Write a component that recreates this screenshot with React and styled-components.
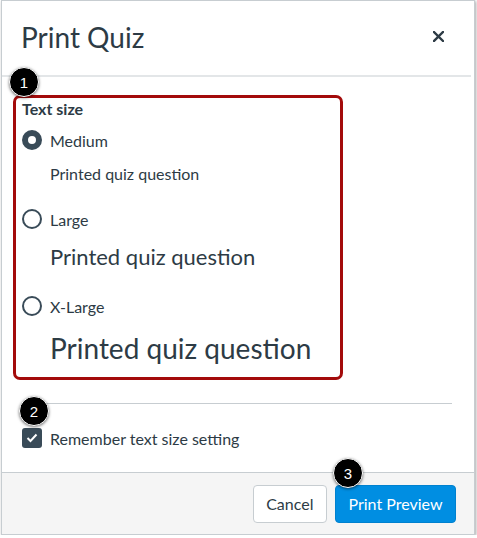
import React, { useState } from 'react';
import styled, { createGlobalStyle } from 'styled-components';

const GlobalStyle = createGlobalStyle`
  body {
    margin: 0;
    background: #fff;
    font-family: Lato, "Liberation Sans", sans-serif;
    color: #2d3b45;
  }
`;

const Dialog = styled.div`
  position: relative;
  box-sizing: border-box;
  width: 474px;
  height: 535px;
  margin-left: 1px;
  border: 1px solid #c7cdd1;
  box-shadow: 1px 1px 3px rgba(0, 0, 0, 0.35);
  display: flex;
  flex-direction: column;
  background: #fff;
`;

const Header = styled.div`
  height: 74px;
  display: flex;
  align-items: center;
  justify-content: space-between;
  padding: 0 26px 0 19px;
  border-bottom: 2px solid #e3e6e8;
  margin-right: 3px;
`;

const Title = styled.h2`
  margin: 0 0 2px;
  font-size: 28px;
  font-weight: 400;
  line-height: 36px;
  color: #2d3b45;
`;

const CloseButton = styled.button`
  border: 0;
  background: transparent;
  padding: 0;
  width: 14px;
  height: 14px;
  display: flex;
  align-items: center;
  justify-content: center;
  cursor: pointer;
  margin-bottom: 4px;
`;

const Body = styled.div`
  flex: 1;
  padding: 18px 22px 0 20px;
`;

const Highlight = styled.fieldset`
  box-sizing: border-box;
  width: 330px;
  height: 285px;
  margin: 0 0 0 -9px;
  padding: 0 0 0 6px;
  border: 3px solid #a30b0b;
  border-radius: 7px;
  min-width: 0;
`;

const Legend = styled.div`
  font-size: 16px;
  font-weight: 700;
  line-height: 22px;
  margin-bottom: 8px;
`;

const OptionGroup = styled.div`
  & + & {
    margin-top: 22px;
  }
`;

const RadioRow = styled.label`
  display: flex;
  align-items: center;
  gap: 8px;
  height: 24px;
  font-size: 16px;
  cursor: pointer;
`;

const RadioCircle = styled.span`
  box-sizing: border-box;
  width: 20px;
  height: 20px;
  border-radius: 50%;
  border: ${(p) => (p.$checked ? '6px' : '2px')} solid #394b58;
  background: #fff;
  flex-shrink: 0;
`;

const Preview = styled.div`
  margin: 11px 0 0 28px;
  font-size: ${(p) => p.$size}px;
  line-height: ${(p) => p.$line}px;
  white-space: nowrap;
`;

const Divider = styled.hr`
  border: 0;
  border-top: 1px solid #c7cdd1;
  margin: 23px 0 0;
`;

const CheckRow = styled.label`
  display: flex;
  align-items: center;
  gap: 8px;
  margin-top: 24px;
  font-size: 16px;
  cursor: pointer;
`;

const CheckBox = styled.span`
  width: 20px;
  height: 20px;
  border-radius: 3px;
  background: #394b58;
  display: flex;
  align-items: center;
  justify-content: center;
`;

const Footer = styled.div`
  height: 61px;
  background: #f5f5f5;
  border-top: 1px solid #c7cdd1;
  display: flex;
  align-items: center;
  justify-content: flex-end;
  gap: 8px;
  padding-right: 18px;
`;

const Button = styled.button`
  height: 38px;
  padding: 0 12.5px;
  border-radius: 4px;
  font-family: Lato, "Liberation Sans", sans-serif;
  font-size: 16px;
  cursor: pointer;
  border: 1px solid ${(p) => (p.$primary ? '#0081cf' : '#c7cdd1')};
  background: ${(p) => (p.$primary ? '#008ee2' : '#fff')};
  color: ${(p) => (p.$primary ? '#fff' : '#2d3b45')};
`;

const Badge = styled.div`
  position: absolute;
  left: ${(p) => p.$x - 14}px;
  top: ${(p) => p.$y - 14}px;
  width: 28px;
  height: 28px;
  border-radius: 50%;
  background: #000;
  border: 1px solid #fff;
  box-shadow: 0 1px 3px rgba(0, 0, 0, 0.55);
  color: #fff;
  font-family: "Liberation Sans", Arial, sans-serif;
  font-size: 15px;
  display: flex;
  align-items: center;
  justify-content: center;
`;

const sizes = [
  { name: 'Medium', size: 16, line: 22 },
  { name: 'Large', size: 22, line: 30 },
  { name: 'X-Large', size: 28, line: 38 },
];

export default function App() {
  const [textSize, setTextSize] = useState('Medium');

  return (
    <>
      <GlobalStyle />
      <Dialog>
        <Header>
          <Title>Print Quiz</Title>
          <CloseButton aria-label="Close">
            <svg width="11" height="11" viewBox="0 0 11 11">
              <path d="M1 1L10 10M10 1L1 10" stroke="#2d3b45" strokeWidth="2.4" strokeLinecap="square" />
            </svg>
          </CloseButton>
        </Header>
        <Body>
          <Highlight>
            <Legend>Text size</Legend>
            {sizes.map((s) => (
              <OptionGroup key={s.name}>
                <RadioRow onClick={() => setTextSize(s.name)}>
                  <RadioCircle $checked={textSize === s.name} />
                  {s.name}
                </RadioRow>
                <Preview $size={s.size} $line={s.line}>Printed quiz question</Preview>
              </OptionGroup>
            ))}
          </Highlight>
          <Divider />
          <CheckRow>
            <CheckBox>
              <svg width="12" height="10" viewBox="0 0 12 10">
                <path d="M1.5 5L4.5 8L10.5 1.5" fill="none" stroke="#fff" strokeWidth="2" />
              </svg>
            </CheckBox>
            Remember text size setting
          </CheckRow>
        </Body>
        <Footer>
          <Button>Cancel</Button>
          <Button $primary>Print Preview</Button>
        </Footer>
        <Badge $x={21} $y={80}>1</Badge>
        <Badge $x={31} $y={409}>2</Badge>
        <Badge $x={345} $y={471}>3</Badge>
      </Dialog>
    </>
  );
}
